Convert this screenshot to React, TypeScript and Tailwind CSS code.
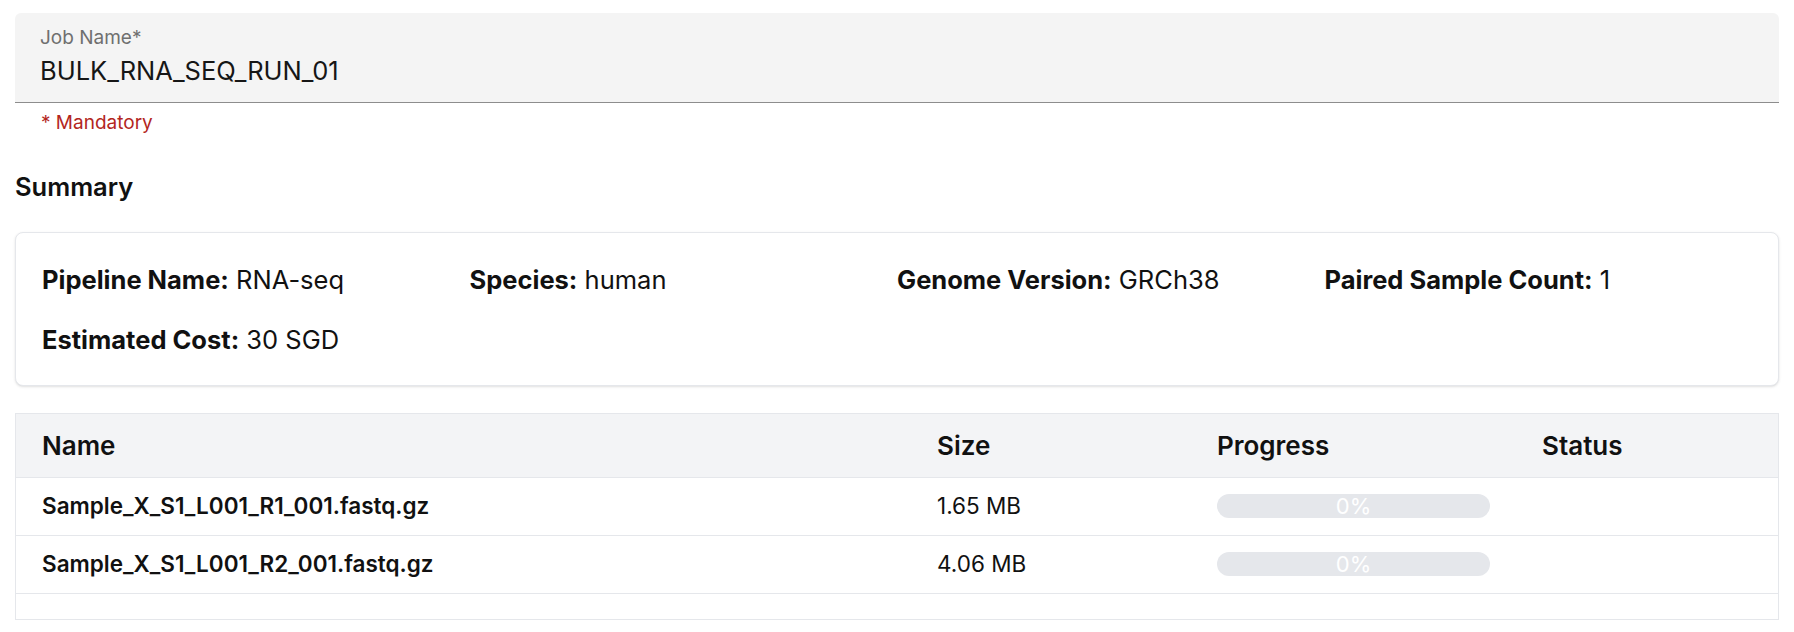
import React from "react";

const files = [
  { name: "Sample_X_S1_L001_R1_001.fastq.gz", size: "1.65 MB", progress: 0 },
  { name: "Sample_X_S1_L001_R2_001.fastq.gz", size: "4.06 MB", progress: 0 },
];

export default function App() {
  return (
    <div className="min-h-screen bg-white px-[15px] pt-[13px] font-['Inter',sans-serif] text-[#111]">
      {/* Job name field */}
      <div className="rounded-t-[6px] bg-[#f4f4f4] border-b border-[#8d8d8d] px-[25px] pt-[13px] pb-[16px]">
        <div className="text-[19px] leading-[24px] text-[#6f6f6f]">Job Name*</div>
        <div className="mt-[6px] text-[25.5px] leading-[30px] text-[#161616]">BULK_RNA_SEQ_RUN_01</div>
      </div>
      <div className="px-[26px] pt-[8px] text-[19px] leading-[24px] text-[#b3261e]">* Mandatory</div>

      <h2 className="mt-[37px] text-[25.5px] leading-[30px] font-semibold">Summary</h2>

      {/* Summary card */}
      <section className="mt-[30px] rounded-[8px] border border-[#e5e7eb] bg-white shadow-sm px-[26px] pt-[31px] pb-[29px]">
        <div className="grid grid-cols-4 gap-y-[28px] text-[25.5px] leading-[32px]">
          <Field label="Pipeline Name" value="RNA-seq" />
          <Field label="Species" value="human" />
          <Field label="Genome Version" value="GRCh38" />
          <Field label="Paired Sample Count" value="1" />
          <Field label="Estimated Cost" value="30 SGD" />
        </div>
      </section>

      {/* Files table */}
      <div className="mt-[27px] border border-[#e5e7eb]">
        <table className="w-full border-collapse table-fixed">
          <colgroup>
            <col className="w-[921px]" />
            <col className="w-[280px]" />
            <col className="w-[325px]" />
            <col />
          </colgroup>
          <thead>
            <tr className="bg-[#f3f4f6] text-left text-[26px]">
              <th className="h-[63px] pl-[26px] font-semibold">Name</th>
              <th className="font-semibold">Size</th>
              <th className="font-semibold">Progress</th>
              <th className="font-semibold">Status</th>
            </tr>
          </thead>
          <tbody className="text-[22.5px]">
            {files.map((f) => (
              <tr key={f.name} className="border-t border-[#e5e7eb]">
                <td className="h-[58px] pl-[26px] font-semibold">{f.name}</td>
                <td>{f.size}</td>
                <td>
                  <div className="relative h-[24px] w-[273px] overflow-hidden rounded-full bg-[#e5e7eb]">
                    <div className="h-full bg-[#3b82f6]" style={{ width: `${f.progress}%` }} />
                    <span className="absolute inset-0 flex items-center justify-center text-[22px] leading-none text-white">
                      {f.progress}%
                    </span>
                  </div>
                </td>
                <td />
              </tr>
            ))}
            <tr className="border-t border-[#e5e7eb]">
              <td className="h-[26px]" colSpan={4} />
            </tr>
          </tbody>
        </table>
      </div>
    </div>
  );
}

function Field({ label, value }: { label: string; value: string }) {
  return (
    <div>
      <span className="font-bold">{label}:</span> <span>{value}</span>
    </div>
  );
}
